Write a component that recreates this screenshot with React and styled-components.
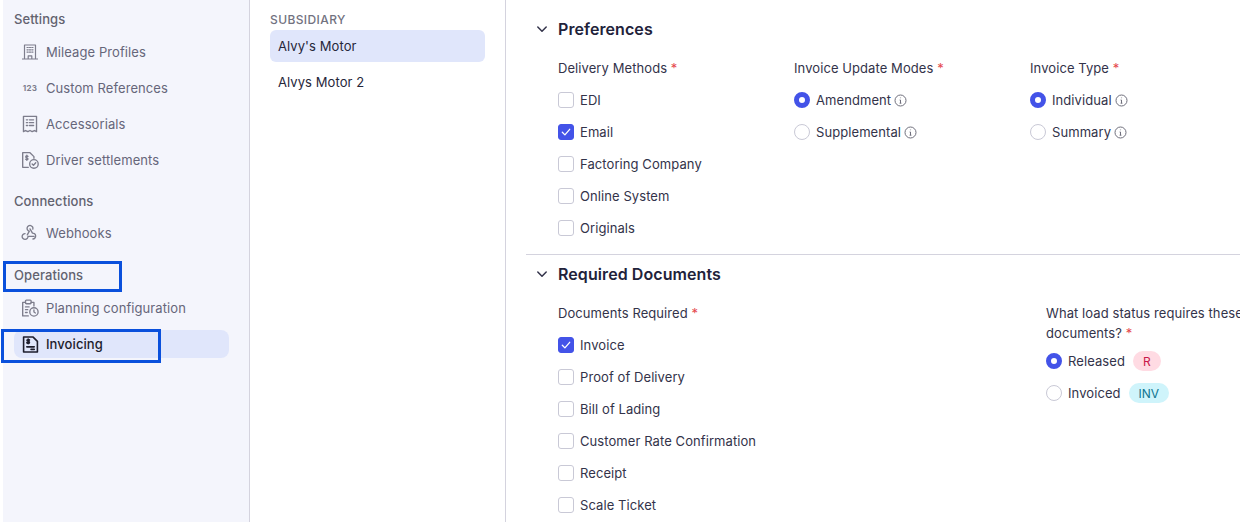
import styled, { createGlobalStyle } from 'styled-components';

const GlobalStyle = createGlobalStyle`
  html, body {
    margin: 0;
    padding: 0;
    background: #fff;
    overflow: hidden;
  }
  body {
    font-family: Inter, "Liberation Sans", sans-serif;
    letter-spacing: 0.08px;
    color: #2e2e45;
  }
`;

const Page = styled.div`
  position: relative;
  display: flex;
  width: 1240px;
  height: 522px;
  overflow: hidden;
  background: #fff;
`;

const Sidebar = styled.aside`
  box-sizing: border-box;
  flex: 0 0 247px;
  margin-left: 3px;
  padding: 11px 20px 0 11px;
  background: #f4f5fc;
  border-right: 1px solid #d4d3de;
`;

const NavHeading = styled.div`
  height: 17px;
  line-height: 17px;
  font-size: 13px;
  font-weight: 500;
  color: #62626f;
  margin-top: ${(p) => p.$top || 0}px;
  margin-bottom: ${(p) => p.$bottom || 0}px;
`;

const NavItem = styled.div`
  display: flex;
  align-items: center;
  height: 28px;
  margin-bottom: 8px;
  padding-left: 7px;
  border-radius: 8px;
  font-size: 13px;
  font-weight: ${(p) => (p.$active ? 500 : 400)};
  color: ${(p) => (p.$active ? '#1d1d2c' : '#66667a')};
  background: ${(p) => (p.$active ? '#e0e6fb' : 'transparent')};
`;

const NavIcon = styled.span`
  display: flex;
  align-items: center;
  justify-content: center;
  flex: 0 0 18px;
  height: 18px;
  margin-right: 7px;
  color: ${(p) => (p.$active ? '#1d1d2c' : '#7d7d8c')};
`;

const NumberIcon = styled.span`
  font-size: 8px;
  font-weight: 700;
  letter-spacing: 0.3px;
  color: #7d7d8c;
`;

const SubsidiaryPanel = styled.section`
  box-sizing: border-box;
  flex: 0 0 256px;
  padding: 13px 20px 0 20px;
  border-right: 1px solid #d4d3de;
`;

const PanelHeading = styled.div`
  height: 14px;
  line-height: 14px;
  font-size: 12px;
  font-weight: 500;
  letter-spacing: 0.4px;
  color: #72727f;
  margin-bottom: 3px;
`;

const SubsidiaryItem = styled.div`
  display: flex;
  align-items: center;
  height: 32px;
  margin-bottom: 4px;
  padding-left: 8px;
  border-radius: 6px;
  font-size: 13px;
  font-weight: 400;
  color: #26263a;
  background: ${(p) => (p.$active ? '#e0e6fb' : 'transparent')};
`;

const Main = styled.main`
  flex: 1;
  min-width: 0;
  padding-left: 20px;
`;

const Section = styled.section`
  padding-top: ${(p) => p.$top}px;
  padding-bottom: ${(p) => p.$bottom || 0}px;
  border-bottom: ${(p) => (p.$divided ? '1px solid #d4d3de' : 'none')};
`;

const SectionTitle = styled.h2`
  display: flex;
  align-items: center;
  gap: 10px;
  height: 20px;
  margin: 0 0 19px 0;
  padding-left: 10px;
  font-size: 16px;
  line-height: 20px;
  font-weight: 600;
  color: #22223a;
`;

const Columns = styled.div`
  display: grid;
  grid-template-columns: ${(p) => p.$cols};
  padding-left: 32px;
`;

const Column = styled.div`
  display: flex;
  flex-direction: column;
  align-items: flex-start;
`;

const FieldLabel = styled.div`
  min-height: 16px;
  line-height: 20px;
  font-size: 13px;
  font-weight: 400;
  color: #33334a;
  margin-bottom: ${(p) => (p.$wrap ? 10 : 14)}px;
  white-space: ${(p) => (p.$wrap ? 'normal' : 'nowrap')};
  width: ${(p) => (p.$wrap ? '210px' : 'auto')};
`;

const Required = styled.span`
  color: #e5484d;
`;

const Option = styled.label`
  display: flex;
  align-items: center;
  height: 16px;
  margin-bottom: 16px;
  font-size: 13px;
  color: #33334a;
  white-space: nowrap;
`;

const Checkbox = styled.span`
  box-sizing: border-box;
  display: flex;
  align-items: center;
  justify-content: center;
  flex: 0 0 16px;
  width: 16px;
  height: 16px;
  margin-right: 6px;
  border-radius: 3px;
  border: 1px solid ${(p) => (p.$on ? '#4353e8' : '#c9c9d6')};
  background: ${(p) => (p.$on ? '#4353e8' : '#fff')};
`;

const Radio = styled.span`
  box-sizing: border-box;
  flex: 0 0 16px;
  width: 16px;
  height: 16px;
  margin-right: 6px;
  border-radius: 50%;
  border: ${(p) => (p.$on ? '5px solid #4353e8' : '1px solid #c9c9d6')};
  background: #fff;
`;

const InfoMark = styled.span`
  display: flex;
  margin-left: 3px;
  color: #6f6f7c;
`;

const Badge = styled.span`
  display: inline-flex;
  align-items: center;
  height: 20px;
  margin-left: 8px;
  padding: 0 10px;
  border-radius: 10px;
  font-size: 12px;
  letter-spacing: 0;
  color: ${(p) => p.$color};
  background: ${(p) => p.$bg};
`;

const Highlight = styled.div`
  position: absolute;
  box-sizing: border-box;
  left: ${(p) => p.$x}px;
  top: ${(p) => p.$y}px;
  width: ${(p) => p.$w}px;
  height: ${(p) => p.$h}px;
  border: 3px solid #0a50dc;
`;

const Glyph = ({ children, size = 16, width = 1.2 }) => (
  <svg width={size} height={size} viewBox="0 0 16 16" fill="none" stroke="currentColor" strokeWidth={width} strokeLinecap="round" strokeLinejoin="round">
    {children}
  </svg>
);

const BuildingIcon = () => (
  <Glyph>
    <path d="M2.5 15V1h11v14M.5 15h15M6.2 15v-3.2h3.6V15" />
    <path d="M5 3.5h1.2M7.4 3.5h1.2M9.8 3.5H11M5 5.8h1.2M7.4 5.8h1.2M9.8 5.8H11M5 8.1h1.2M7.4 8.1h1.2M9.8 8.1H11" />
  </Glyph>
);

const ReceiptIcon = () => (
  <Glyph size={18}>
    <path d="M2.2 1.2h11.6v13.6l-1.9-1-2 1-1.9-1-1.9 1-2-1-1.9 1z" />
    <path d="M4.8 4.3h1.1M7.5 4.3h3.7M4.8 6.8h1.1M7.5 6.8h3.7M4.8 9.3h1.1M7.5 9.3h3.7" />
  </Glyph>
);

const SettlementIcon = () => (
  <Glyph size={18}>
    <path d="M6.5 14.5H1.5V1.5h6.5l3.5 3.5v1.5" />
    <path d="M6.2 4.8c-.3-.5-1.9-.7-2 .3-.1 1.2 2 .7 2 1.9 0 1-1.7.9-2.1.3M5.2 3.8v4.4" />
    <circle cx="11.5" cy="11.5" r="3.8" />
    <path d="M9.9 11.5l1.2 1.2 2-2.2" />
  </Glyph>
);

const WebhookIcon = () => (
  <Glyph size={18}>
    <path d="M5.6 9.6L7.4 6.4A2.6 2.6 0 1 1 10.5 4.6" />
    <path d="M8 4.3l2.2 3.8a2.6 2.6 0 1 1 .4 5.2" />
    <path d="M11.6 11H6.2a2.6 2.6 0 1 1-2.6-2.5" />
  </Glyph>
);

const PlanningIcon = () => (
  <Glyph size={18}>
    <path d="M6.5 15H1.5V3H4M9 3h2.5v3.2" />
    <rect x="4" y="1" width="5" height="3.2" rx="0.8" />
    <path d="M4 7h3.2M4 9.5h2M4 12h1.5" />
    <circle cx="11.5" cy="11.5" r="3.7" />
    <path d="M11.5 9.6v2l1.3.8" />
  </Glyph>
);

const InvoiceIcon = () => (
  <Glyph size={17} width={1.5}>
    <path d="M1.5 1h9l4 4v10h-13z" />
    <path d="M7 3.8c-.4-.6-2.2-.7-2.3.3-.1 1.2 2.3.7 2.3 1.9 0 1-1.9 1-2.4.3M5.8 2.8v4.4M4.5 10.2h7M8.5 12.6h3" />
  </Glyph>
);

const CheckMark = () => (
  <svg width="12" height="12" viewBox="0 0 12 12" fill="none" stroke="#fff" strokeWidth="1.3" strokeLinecap="round" strokeLinejoin="round">
    <path d="M2.3 6.3l2.6 2.6 4.8-5.6" />
  </svg>
);

const Chevron = () => (
  <svg width="12" height="12" viewBox="0 0 12 12" fill="none" stroke="#33334a" strokeWidth="1.5" strokeLinecap="round" strokeLinejoin="round">
    <path d="M1.8 4l4.2 4.2L10.2 4" />
  </svg>
);

const Info = () => (
  <InfoMark>
    <svg width="13" height="13" viewBox="0 0 13 13" fill="none" stroke="currentColor" strokeWidth="1">
      <circle cx="6.5" cy="6.5" r="5.5" />
      <path d="M6.5 6v3.2M5.6 9.2h1.8M5.6 6h.9" />
      <path d="M6.5 3.6v.6" strokeWidth="1.2" />
    </svg>
  </InfoMark>
);

const CheckOption = ({ label, on }) => (
  <Option>
    <Checkbox $on={on}>{on && <CheckMark />}</Checkbox>
    {label}
  </Option>
);

const RadioOption = ({ label, on, children }) => (
  <Option>
    <Radio $on={on} />
    {label}
    {children}
  </Option>
);

const App = () => {
  return (
    <Page>
      <GlobalStyle />
      <Sidebar>
        <NavHeading $bottom={10}>Settings</NavHeading>
        <NavItem><NavIcon><BuildingIcon /></NavIcon>Mileage Profiles</NavItem>
        <NavItem><NavIcon><NumberIcon>123</NumberIcon></NavIcon>Custom References</NavItem>
        <NavItem><NavIcon><ReceiptIcon /></NavIcon>Accessorials</NavItem>
        <NavItem><NavIcon><SettlementIcon /></NavIcon>Driver settlements</NavItem>
        <NavHeading $top={19} $bottom={9}>Connections</NavHeading>
        <NavItem><NavIcon><WebhookIcon /></NavIcon>Webhooks</NavItem>
        <NavHeading $top={20} $bottom={10}>Operations</NavHeading>
        <NavItem><NavIcon><PlanningIcon /></NavIcon>Planning configuration</NavItem>
        <NavItem $active><NavIcon $active><InvoiceIcon /></NavIcon>Invoicing</NavItem>
      </Sidebar>

      <SubsidiaryPanel>
        <PanelHeading>SUBSIDIARY</PanelHeading>
        <SubsidiaryItem $active>Alvy's Motor</SubsidiaryItem>
        <SubsidiaryItem>Alvys Motor 2</SubsidiaryItem>
      </SubsidiaryPanel>

      <Main>
        <Section $top={19} $bottom={2} $divided>
          <SectionTitle><Chevron />Preferences</SectionTitle>
          <Columns $cols="236px 236px 1fr">
            <Column>
              <FieldLabel>Delivery Methods <Required>*</Required></FieldLabel>
              <CheckOption label="EDI" />
              <CheckOption label="Email" on />
              <CheckOption label="Factoring Company" />
              <CheckOption label="Online System" />
              <CheckOption label="Originals" />
            </Column>
            <Column>
              <FieldLabel>Invoice Update Modes <Required>*</Required></FieldLabel>
              <RadioOption label="Amendment" on><Info /></RadioOption>
              <RadioOption label="Supplemental"><Info /></RadioOption>
            </Column>
            <Column>
              <FieldLabel>Invoice Type <Required>*</Required></FieldLabel>
              <RadioOption label="Individual" on><Info /></RadioOption>
              <RadioOption label="Summary"><Info /></RadioOption>
            </Column>
          </Columns>
        </Section>
        <Section $top={9}>
          <SectionTitle><Chevron />Required Documents</SectionTitle>
          <Columns $cols="488px 1fr">
            <Column>
              <FieldLabel>Documents Required <Required>*</Required></FieldLabel>
              <CheckOption label="Invoice" on />
              <CheckOption label="Proof of Delivery" />
              <CheckOption label="Bill of Lading" />
              <CheckOption label="Customer Rate Confirmation" />
              <CheckOption label="Receipt" />
              <CheckOption label="Scale Ticket" />
            </Column>
            <Column>
              <FieldLabel $wrap>What load status requires these documents? <Required>*</Required></FieldLabel>
              <RadioOption label="Released" on><Badge $color="#c9184a" $bg="#ffdbe3">R</Badge></RadioOption>
              <RadioOption label="Invoiced"><Badge $color="#0e7490" $bg="#cff4fb">INV</Badge></RadioOption>
            </Column>
          </Columns>
        </Section>
      </Main>

      <Highlight $x={3} $y={261} $w={119} $h={31} />
      <Highlight $x={1} $y={329} $w={160} $h={34} />
    </Page>
  );
};

export default App;
